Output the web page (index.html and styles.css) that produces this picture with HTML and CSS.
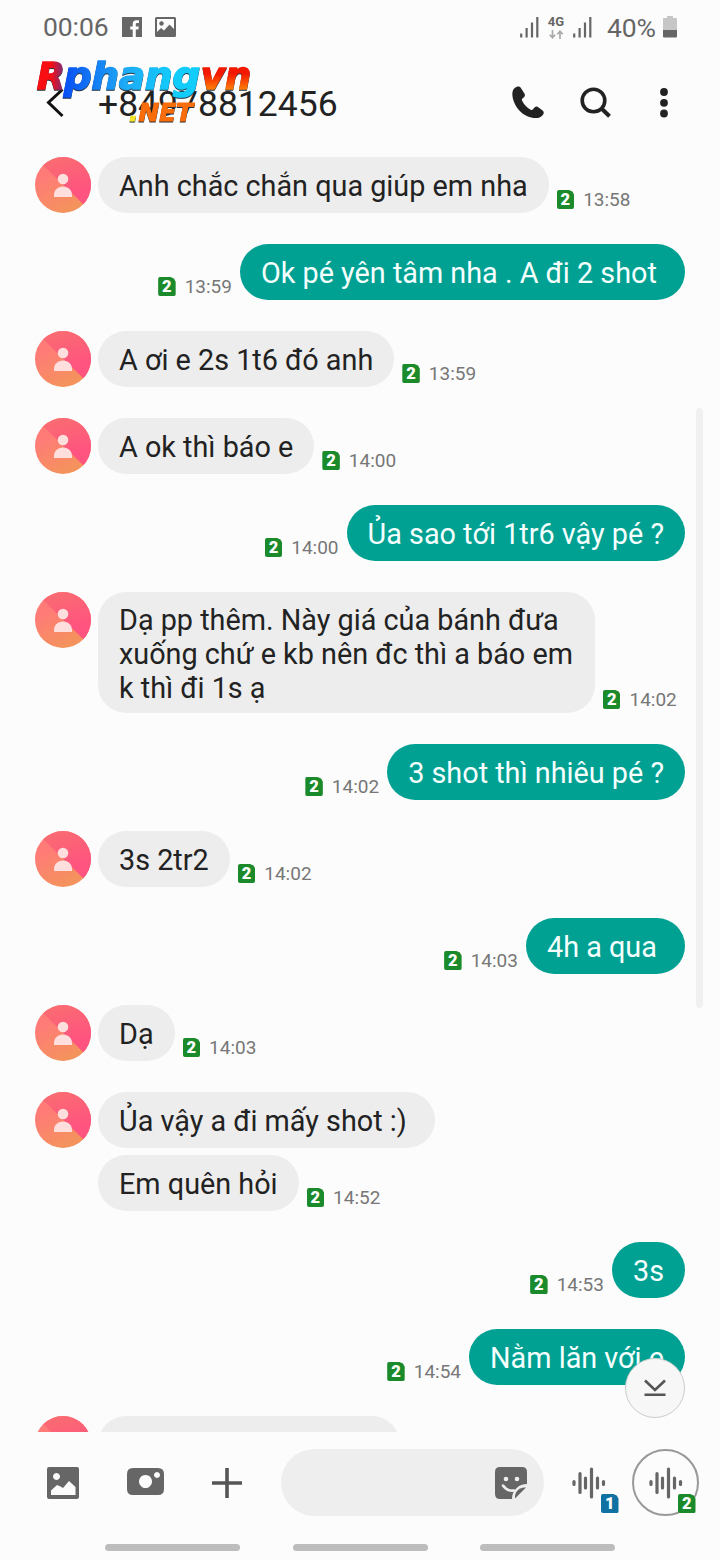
FILE: index.html
```
<!DOCTYPE html>
<html lang="vi">
<head>
<meta charset="utf-8">
<title>Messages</title>
<link rel="stylesheet" href="styles.css">
</head>
<body>
<svg class="defs" width="0" height="0" aria-hidden="true">
  <defs>
    <linearGradient id="g-left" x1="0" y1="0" x2=".5" y2="1"><stop offset=".35" stop-color="#ff7b78"/><stop offset="1" stop-color="#f4935c"/></linearGradient>
    <linearGradient id="g-right" x1="0" y1="0" x2=".3" y2="1"><stop offset="0" stop-color="#f9706f"/><stop offset=".8" stop-color="#ff5380"/></linearGradient>
    <clipPath id="c-av"><circle cx="28" cy="28" r="28"/></clipPath>
  </defs>
  <symbol id="avatar" viewBox="0 0 56 56">
    <g clip-path="url(#c-av)">
      <rect width="56" height="56" fill="url(#g-left)"/>
      <path d="M0 0H56V56L47 46L9 9Z" fill="url(#g-right)"/>
    </g>
    <circle cx="28" cy="22" r="5.300" fill="#ffdede"/>
    <path d="M19 40v-2c0-5 4-8.500 9-8.500s9 3.500 9 8.500v2z" fill="#ffdede"/>
  </symbol>
  <symbol id="wave" viewBox="0 0 34 32">
    <path d="M2 14.500v3M8 6.500v19M13.500 11v10M19.500 2v28M25.500 11v10M31.500 14.500v3" stroke="#666" stroke-width="3.200" stroke-linecap="round"/>
  </symbol>
  <symbol id="signal" viewBox="0 0 19 21"><path d="M1.200 16.500v4M6.600 11v9.500M12 5.500v15M17.300 0v20.500" stroke="#666" stroke-width="2.200"/></symbol>
</svg>

<div class="phone">
  <header class="status">
    <span class="clock">00:06</span>
    <svg class="st-fb" width="20" height="20" viewBox="0 0 20 20"><path fill="#666" d="M0 0h20v20h-6.200v-7.500h2.500l.5-3h-3V7.600c0-1 .4-1.500 1.600-1.500h1.600V3.200h-2.600c-2.600 0-3.700 1.600-3.700 3.800v2.500H8.200v3h2.500V20H0z"/></svg>
    <svg class="st-pic" width="21" height="20" viewBox="0 0 21 20"><path fill="#666" fill-rule="evenodd" d="M1.500 0h18q1.500 0 1.500 1.500v17q0 1.500-1.500 1.500h-18Q0 20 0 18.500v-17Q0 0 1.500 0zM2 2v13l4-4 3 2.500 5.500-6L19 12V2z"/><circle cx="6.500" cy="6.500" r="2.200" fill="#666"/></svg>
    <span class="grow"></span>
    <svg class="st-sig" width="19" height="21"><use href="#signal"/></svg>
    <span class="net"><b>4G</b><svg width="15" height="9" viewBox="0 0 15 9"><path d="M3.500 0v7.500M.8 4.800l2.700 3 2.700-3M11 9V1.500M8.300 4.200l2.700-3 2.700 3" fill="none" stroke="#aaa" stroke-width="1.700"/></svg></span>
    <svg class="st-sig" width="19" height="21"><use href="#signal"/></svg>
    <span class="pct">40%</span>
    <svg class="st-bat" width="14" height="22" viewBox="0 0 14 22"><path fill="#c6c6c6" d="M4 0h6v2h3q1 0 1 1v11H0V3q0-1 1-1h3z"/><path fill="#666" d="M0 14h14v6.500q0 1-1 1H1q-1 0-1-1z"/></svg>
  </header>

  <div class="title-bar">
    <svg class="back" width="18" height="30" viewBox="0 0 18 30"><path d="M16.500 1.500L2.500 14.500L16.500 28" fill="none" stroke="#111" stroke-width="3"/></svg>
    <h1 class="number">+84978812456</h1>
    <svg class="call" width="32" height="33" viewBox="0 0 32 33"><path fill="#222" d="M5 .8C2 1.600.3 4.500.3 8c.5 12 10 22.500 21.200 24 4.500.5 8-.7 9.800-3.800.8-1.400.5-2.700-.7-3.700l-4.300-3.200c-1.300-1-2.700-.9-3.800.2l-1.800 2c-.6.600-1.300.7-2 .3-3.800-2-7-5.500-8.700-9.300-.3-.8-.1-1.500.5-2l1.400-1.200c1.200-1.100 1.300-2.300.5-3.700L9.200 2.400C8.200.8 6.700.3 5 .8z"/></svg>
    <svg class="find" width="32" height="32" viewBox="0 0 32 32"><circle cx="13.500" cy="13.500" r="11.300" fill="none" stroke="#222" stroke-width="3.600"/><path d="M21.500 21.500L29.500 29.300" stroke="#222" stroke-width="4"/></svg>
    <svg class="more" width="8" height="30" viewBox="0 0 8 30"><g fill="#222"><circle cx="4" cy="4" r="3.900"/><circle cx="4" cy="14.800" r="3.900"/><circle cx="4" cy="25.500" r="3.900"/></g></svg>
    <svg class="watermark" width="226" height="76" viewBox="0 0 226 76">
      <defs>
        <linearGradient id="w-r" x1="0" x2="1"><stop offset=".5" stop-color="#f70d12"/><stop offset="1" stop-color="#713184"/></linearGradient>
        <linearGradient id="w-p" x1="0" x2="1"><stop offset="0" stop-color="#084df5"/><stop offset=".45" stop-color="#1eaaf5"/><stop offset=".8" stop-color="#12ccfc"/></linearGradient>
        <linearGradient id="w-v" x1="0" y1="0" x2="0" y2="1"><stop offset=".45" stop-color="#f51800"/><stop offset=".8" stop-color="#ff7d08"/></linearGradient>
      </defs>
      <text x="6" y="37" textLength="28" lengthAdjust="spacingAndGlyphs" fill="url(#w-r)" stroke="url(#w-r)">R</text>
      <text x="33" y="37" textLength="136" lengthAdjust="spacingAndGlyphs" fill="url(#w-p)" stroke="url(#w-p)">phang</text>
      <text x="170" y="37" textLength="50" lengthAdjust="spacingAndGlyphs" fill="url(#w-v)" stroke="url(#w-v)">vn</text>
      <text class="wm-small" x="98" y="68.500" textLength="64" lengthAdjust="spacingAndGlyphs" fill="#f96d0b" stroke="#f96d0b"><tspan fill="#f5e52a" stroke="#f5e52a">.</tspan>NET</text>
    </svg>
  </div>

  <main class="thread">
    <div class="msg in"><svg class="avatar"><use href="#avatar"/></svg><p class="bubble">Anh chắc chắn qua giúp em nha</p><span class="meta"><i class="sim">2</i>13:58</span></div>
    <div class="msg out"><span class="meta"><i class="sim">2</i>13:59</span><p class="bubble">Ok pé yên tâm nha . A đi 2 shot </p></div>
    <div class="msg in"><svg class="avatar"><use href="#avatar"/></svg><p class="bubble">A ơi e 2s 1t6 đó anh</p><span class="meta"><i class="sim">2</i>13:59</span></div>
    <div class="msg in"><svg class="avatar"><use href="#avatar"/></svg><p class="bubble">A ok thì báo e</p><span class="meta"><i class="sim">2</i>14:00</span></div>
    <div class="msg out"><span class="meta"><i class="sim">2</i>14:00</span><p class="bubble">Ủa sao tới 1tr6 vậy pé ?</p></div>
    <div class="msg in"><svg class="avatar"><use href="#avatar"/></svg><p class="bubble long">Dạ pp thêm. Này giá của bánh đưa<br>xuống chứ e kb nên đc thì a báo em<br>k thì đi 1s ạ</p><span class="meta"><i class="sim">2</i>14:02</span></div>
    <div class="msg out"><span class="meta"><i class="sim">2</i>14:02</span><p class="bubble">3 shot thì nhiêu pé ?</p></div>
    <div class="msg in"><svg class="avatar"><use href="#avatar"/></svg><p class="bubble">3s 2tr2</p><span class="meta"><i class="sim">2</i>14:02</span></div>
    <div class="msg out"><span class="meta"><i class="sim">2</i>14:03</span><p class="bubble">4h a qua </p></div>
    <div class="msg in"><svg class="avatar"><use href="#avatar"/></svg><p class="bubble">Dạ</p><span class="meta"><i class="sim">2</i>14:03</span></div>
    <div class="msg in"><svg class="avatar"><use href="#avatar"/></svg><p class="bubble">Ủa vậy a đi mấy shot :) </p></div>
    <div class="msg in follow"><p class="bubble">Em quên hỏi</p><span class="meta"><i class="sim">2</i>14:52</span></div>
    <div class="msg out"><span class="meta"><i class="sim">2</i>14:53</span><p class="bubble">3s</p></div>
    <div class="msg out"><span class="meta"><i class="sim">2</i>14:54</span><p class="bubble">Nằm lăn với e</p></div>
    <div class="msg in"><svg class="avatar"><use href="#avatar"/></svg><p class="bubble blank"></p></div>
    <div class="scrollbar"></div>
    <button class="to-end" aria-label="Xuống cuối"><svg width="22" height="18" viewBox="0 0 22 18"><path d="M1 1.500L11 11L21 1.500M.5 15.800H21.500" fill="none" stroke="#555" stroke-width="2.600"/></svg></button>
  </main>

  <footer class="composer">
    <svg class="gallery" width="32" height="32" viewBox="0 0 32 32"><path fill="#666" fill-rule="evenodd" d="M2 0h28q2 0 2 2v28q0 2-2 2H2q-2 0-2-2V2Q0 0 2 0zM4 23.500v4.500h24.500v-8l-6.500-6-6 7-2.500-1.500L10 18zM9.500 6a3.500 3.500 0 1 0 .01 0z"/></svg>
    <svg class="camera" width="37" height="27" viewBox="0 0 37 27"><path fill="#666" fill-rule="evenodd" d="M6 0h25q6 0 6 6v15q0 6-6 6H6q-6 0-6-6V6Q0 0 6 0zM18.500 7a6.500 6.500 0 1 0 .01 0zM30 4a3 3 0 1 0 .01 0z"/></svg>
    <svg class="plus" width="30" height="30" viewBox="0 0 30 30"><path d="M15 0v30M0 15h30" stroke="#555" stroke-width="3.600"/></svg>
    <div class="field"><svg width="32" height="32" viewBox="0 0 32 32"><path fill="#666" d="M5 0H27q5 0 5 5V17C24 17 17 23 17 32H5q-5 0-5-5V5Q0 0 5 0z"/><path fill="#666" d="M31 20.500L20 31.500V29C20.500 24 25 20.500 29 20.500z"/><circle cx="11" cy="12" r="2.300" fill="#eee"/><circle cx="22" cy="12" r="2.300" fill="#eee"/><path d="M8 18.500Q12 24.500 19 23.500" fill="none" stroke="#eee" stroke-width="2.600" stroke-linecap="round"/></svg></div>
    <div class="send one"><svg width="34" height="32"><use href="#wave"/></svg><i class="sim blue">1</i></div>
    <div class="send ring"><svg width="34" height="32"><use href="#wave"/></svg><i class="sim">2</i></div>
  </footer>
  <nav class="gestures"><span></span><span></span><span></span></nav>
</div>
</body>
</html>
```
FILE: styles.css
```
* { box-sizing: border-box; }
body { margin: 0; background: #fcfcfc; font-family: Roboto, "Noto Sans", sans-serif; color: #222; }
.defs { position: absolute; }
.phone { width: 720px; height: 1560px; display: flex; flex-direction: column; overflow: hidden; }
svg { display: block; flex: none; }

.status { height: 54px; flex: none; display: flex; align-items: center; padding: 0 43px 0 43px; color: #666; font-size: 26.5px; }
.clock { width: 79px; line-height: 54px; letter-spacing: -.1px; }
.st-pic { margin-left: 13px; }
.grow { flex: 1; }
.net { width: 34px; display: flex; flex-direction: column; align-items: center; gap: 2px; }
.net b { font-size: 13px; line-height: 13px; font-weight: 700; }
.pct { width: 50px; margin: 0 6px 0 15px; letter-spacing: -.2px; }

.title-bar { height: 103px; flex: none; display: flex; align-items: center; padding: 0 52px 6px 46px; position: relative; }
.number { margin: 2px 0 0 34px; width: 415px; font-size: 35.5px; line-height: 42px; font-weight: 400; letter-spacing: 0; }
.call { margin-right: 36px; }
.find { margin-right: 48px; }
.watermark { position: absolute; left: 31px; top: -2px; overflow: visible; filter: drop-shadow(0 1.5px 0 #24313f); }
.watermark text { font-family: "DejaVu Sans", sans-serif; font-weight: 700; font-style: italic; font-size: 38px; stroke-width: 1.6px; }
.watermark .wm-small { font-size: 25px; stroke-width: 1px; }

.thread { position: relative; height: 1275px; flex: none; overflow: hidden; padding: 0 35px; display: flex; flex-direction: column; gap: 31px; }
.msg { display: flex; align-items: flex-start; flex: none; }
.msg.out { justify-content: flex-end; }
.msg.follow { margin-top: -24px; padding-left: 63px; }
.avatar { width: 56px; height: 56px; margin-right: 7px; }
.bubble { margin: 0; min-height: 56px; padding: 12px 21px 10px; border-radius: 28px; background: #ededed; color: #222; font-size: 28.8px; line-height: 34px; white-space: pre; }
.bubble.long { padding: 11px 22px 8px 21px; }
.bubble.blank { width: 302px; }
.out .bubble { background: #00a193; color: #f4fffe; }
.meta { align-self: flex-end; display: flex; align-items: center; height: 19px; margin: 0 8px 4px; gap: 9px; font-size: 19px; line-height: 19px; color: #777; }
.sim { width: 17.5px; height: 19px; flex: none; display: grid; place-items: center; background: #1b8a2b; color: #fff; font: 900 16.5px/19px Roboto, sans-serif; border-radius: 2px; clip-path: polygon(0 0, 70% 0, 90% 8%, 100% 25%, 100% 100%, 0 100%); }
.sim.blue { background: #0f72a3; }
.scrollbar { position: absolute; left: 696px; top: 251px; width: 7px; height: 600px; border-radius: 4px; background: #f0f0f0; }
.to-end { position: absolute; left: 625px; top: 1201px; width: 60px; height: 60px; padding: 0; display: grid; place-items: center; border: 1px solid #ccc; border-radius: 50%; background: #f7f7f7; }

.composer { height: 101px; flex: none; display: flex; align-items: center; padding: 0 21px 0 47px; }
.camera { margin-left: 48px; margin-top: -2px; }
.plus { margin-left: 48px; }
.field { width: 263px; height: 67px; margin-left: 39px; padding-right: 17px; border-radius: 34px; background: #eee; display: flex; align-items: center; justify-content: flex-end; }
.send { position: relative; flex: none; display: grid; place-items: center; }
.one { width: 34px; height: 67px; margin: 0 26px 0 28px; }
.ring { width: 67px; height: 67px; border: 2px solid #999; border-radius: 50%; }
.send .sim { position: absolute; top: 45px; left: 29px; }
.ring .sim { top: 43px; left: 44px; }

.gestures { flex: 1; display: flex; gap: 52.5px; padding: 11px 0 0 105px; }
.gestures span { width: 135px; height: 7px; border-radius: 4px; background: #bdbdbd; }
```
